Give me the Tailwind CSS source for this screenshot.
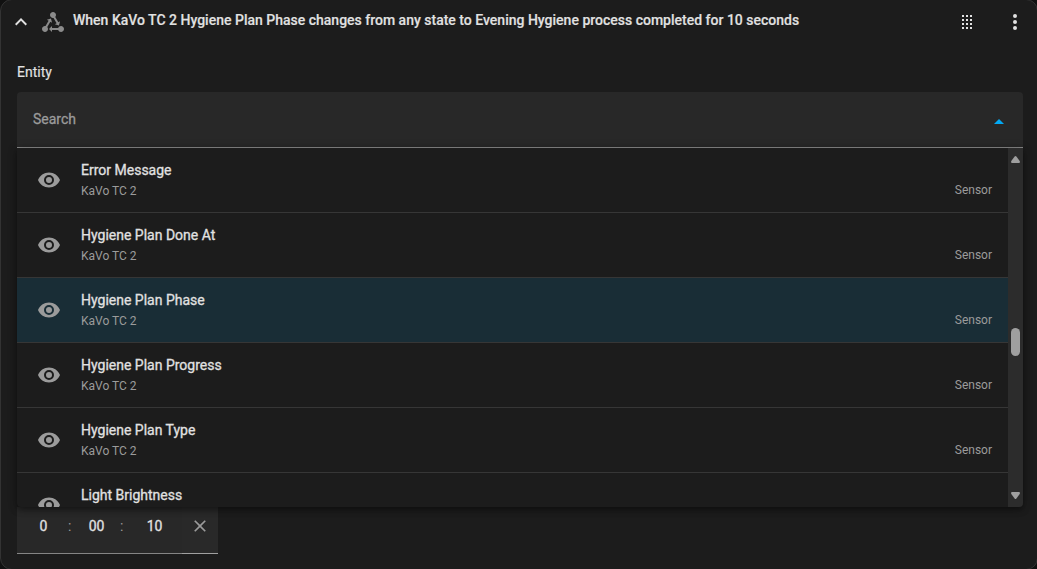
<!DOCTYPE html>
<html lang="en">
<head>
<meta charset="utf-8">
<title>Automation trigger</title>
<script src="https://cdn.jsdelivr.net/npm/@tailwindcss/browser@4"></script>
</head>
<body class="h-[569px] w-[1037px] overflow-hidden bg-[#111111] font-['Roboto',sans-serif] text-[#e1e1e1]">
<svg class="hidden">
  <symbol id="eye" viewBox="0 0 24 24"><path fill="currentColor" d="M12,9A3,3 0 0,0 9,12A3,3 0 0,0 12,15A3,3 0 0,0 15,12A3,3 0 0,0 12,9M12,17A5,5 0 0,1 7,12A5,5 0 0,1 12,7A5,5 0 0,1 17,12A5,5 0 0,1 12,17M12,4.5C7,4.5 2.73,7.61 1,12C2.73,16.39 7,19.5 12,19.5C17,19.5 21.27,16.39 23,12C21.27,7.61 17,4.5 12,4.5Z"/></symbol>
</svg>
<main class="-mt-px flex h-[571px] w-[1038px] flex-col rounded-xl border border-[#333333] bg-[#1c1c1c] pr-3.5 pl-4">
  <header class="-ml-2 flex h-11 shrink-0 items-center">
    <svg class="size-6 shrink-0" viewBox="0 0 24 24"><path fill="currentColor" d="M7.41,15.41L12,10.83L16.59,15.41L18,14L12,8L6,14L7.41,15.41Z"/></svg>
    <svg class="ml-2 size-6 shrink-0 text-[#8b8b8b]" viewBox="0 0 24 24"><path fill="currentColor" d="M6.27 17.05C6.72 17.58 7 18.25 7 19C7 20.66 5.66 22 4 22S1 20.66 1 19 2.34 16 4 16C4.18 16 4.36 16 4.53 16.05L7.6 10.69L5.86 9.7L9.95 8.58L11.07 12.67L9.33 11.68L6.27 17.05M20 16C18.7 16 17.6 16.84 17.18 18H11V16L8 19L11 22V20H17.18C17.6 21.16 18.7 22 20 22C21.66 22 23 20.66 23 19S21.66 16 20 16M12 8C12.18 8 12.36 8 12.53 7.95L15.6 13.31L13.86 14.3L17.95 15.42L19.07 11.33L17.33 12.32L14.27 6.95C14.72 6.42 15 5.75 15 5C15 3.34 13.66 2 12 2S9 3.34 9 5 10.34 8 12 8Z"/></svg>
    <h3 class="ml-2 grow pb-1 text-sm font-medium whitespace-nowrap [-webkit-text-stroke:0.15px]">When KaVo TC 2 Hygiene Plan Phase changes from any state to Evening Hygiene process completed for 10 seconds</h3>
    <svg class="size-6 shrink-0" viewBox="0 0 24 24"><path fill="currentColor" d="M7 5h2v2H7zM11 5h2v2h-2zM15 5h2v2h-2zM7 9h2v2H7zM11 9h2v2h-2zM15 9h2v2h-2zM7 13h2v2H7zM11 13h2v2h-2zM15 13h2v2h-2zM7 17h2v2H7zM11 17h2v2h-2zM15 17h2v2h-2z"/></svg>
    <svg class="-mr-1 ml-6 size-6 shrink-0" viewBox="0 0 24 24"><path fill="currentColor" d="M12,16A2,2 0 0,1 14,18A2,2 0 0,1 12,20A2,2 0 0,1 10,18A2,2 0 0,1 12,16M12,10A2,2 0 0,1 14,12A2,2 0 0,1 12,14A2,2 0 0,1 10,12A2,2 0 0,1 12,10M12,4A2,2 0 0,1 14,6A2,2 0 0,1 12,8A2,2 0 0,1 10,6A2,2 0 0,1 12,4Z"/></svg>
  </header>
  <label class="mt-[18px] h-5 shrink-0 text-sm [-webkit-text-stroke:0.15px]">Entity</label>
  <div class="mt-2.5 flex h-14 shrink-0 items-center justify-between rounded-t border-b border-[#8c8c8c] bg-[#282828] pr-3 pl-4">
    <span class="mb-0.5 text-sm text-[#9b9b9b] [-webkit-text-stroke:0.3px]">Search</span>
    <svg class="mt-[3px] size-6 text-[#03a9f4]" viewBox="0 0 24 24"><path fill="currentColor" d="M7,15L12,10L17,15H7Z"/></svg>
  </div>
  <section class="relative z-10 flex h-[359px] shrink-0 overflow-hidden rounded-b bg-[#1c1c1c] shadow-[0_3px_6px_rgba(0,0,0,0.35),0_1px_10px_rgba(0,0,0,0.25)]">
    <ul class="grow">
      <li class="flex h-[65px] items-center border-b border-[#363636] pr-4 pl-5"><svg class="size-6 text-[#9b9b9b]"><use href="#eye"/></svg><div class="ml-5 grow"><p class="text-sm/5 [-webkit-text-stroke:0.3px]">Error Message</p><p class="-mb-px pt-px text-xs/5 text-[#9b9b9b]">KaVo TC 2</p></div><span class="mt-[19px] text-xs text-[#9b9b9b]">Sensor</span></li>
      <li class="flex h-[65px] items-center border-b border-[#363636] pr-4 pl-5"><svg class="size-6 text-[#9b9b9b]"><use href="#eye"/></svg><div class="ml-5 grow"><p class="text-sm/5 [-webkit-text-stroke:0.3px]">Hygiene Plan Done At</p><p class="-mb-px pt-px text-xs/5 text-[#9b9b9b]">KaVo TC 2</p></div><span class="mt-[19px] text-xs text-[#9b9b9b]">Sensor</span></li>
      <li class="flex h-[65px] items-center border-b border-[#363636] bg-[#192d36] pr-4 pl-5"><svg class="size-6 text-[#9b9b9b]"><use href="#eye"/></svg><div class="ml-5 grow"><p class="text-sm/5 [-webkit-text-stroke:0.3px]">Hygiene Plan Phase</p><p class="-mb-px pt-px text-xs/5 text-[#9b9b9b]">KaVo TC 2</p></div><span class="mt-[19px] text-xs text-[#9b9b9b]">Sensor</span></li>
      <li class="flex h-[65px] items-center border-b border-[#363636] pr-4 pl-5"><svg class="size-6 text-[#9b9b9b]"><use href="#eye"/></svg><div class="ml-5 grow"><p class="text-sm/5 [-webkit-text-stroke:0.3px]">Hygiene Plan Progress</p><p class="-mb-px pt-px text-xs/5 text-[#9b9b9b]">KaVo TC 2</p></div><span class="mt-[19px] text-xs text-[#9b9b9b]">Sensor</span></li>
      <li class="flex h-[65px] items-center border-b border-[#363636] pr-4 pl-5"><svg class="size-6 text-[#9b9b9b]"><use href="#eye"/></svg><div class="ml-5 grow"><p class="text-sm/5 [-webkit-text-stroke:0.3px]">Hygiene Plan Type</p><p class="-mb-px pt-px text-xs/5 text-[#9b9b9b]">KaVo TC 2</p></div><span class="mt-[19px] text-xs text-[#9b9b9b]">Sensor</span></li>
      <li class="flex h-[65px] items-start pl-5"><svg class="mt-5 size-6 text-[#9b9b9b]"><use href="#eye"/></svg><p class="mt-3 ml-5 text-sm/5 [-webkit-text-stroke:0.3px]">Light Brightness</p></li>
    </ul>
    <div class="flex w-[15px] shrink-0 flex-col items-center bg-[#2c2c2c] text-[#9f9f9f]">
      <svg class="mt-2 h-[7px] w-[9px] shrink-0" viewBox="0 0 9 7"><path fill="currentColor" d="M3.6.5Q4.5-.5 5.4.5L8.7 5Q9.4 7 8 7H1Q-.4 7 .3 5Z"/></svg>
      <div class="mt-[165px] h-7 w-[9px] shrink-0 rounded-full bg-[#9f9f9f]"></div>
      <svg class="mt-auto mb-2 h-[7px] w-[9px] shrink-0" viewBox="0 0 9 7"><path fill="currentColor" d="M3.6 6.5Q4.5 7.5 5.4 6.5L8.7 2Q9.4 0 8 0H1Q-.4 0 .3 2Z"/></svg>
    </div>
  </section>
  <div class="flex h-[47px] w-[201px] shrink-0 text-sm/5">
    <div class="flex w-[165px] border-b border-[#858585] bg-[#282828] pt-[9px]">
      <span class="w-[53px] shrink-0 text-center [-webkit-text-stroke:0.3px]">0</span>
      <span class="w-0 -translate-x-0.5 text-[#9b9b9b]">:</span>
      <span class="w-[53px] shrink-0 text-center [-webkit-text-stroke:0.3px]">00</span>
      <span class="w-0 -translate-x-[3px] text-[#9b9b9b]">:</span>
      <span class="w-[63px] shrink-0 text-center [-webkit-text-stroke:0.3px]">10</span>
    </div>
    <div class="flex grow justify-center border-b border-[#a0a0a0] bg-[#292929] pt-[9px]">
      <svg class="size-5 text-[#9b9b9b]" viewBox="0 0 24 24"><path fill="currentColor" d="M19,6.41L17.59,5L12,10.59L6.41,5L5,6.41L10.59,12L5,17.59L6.41,19L12,13.41L17.59,19L19,17.59L13.41,12L19,6.41Z"/></svg>
    </div>
  </div>
</main>
</body>
</html>
